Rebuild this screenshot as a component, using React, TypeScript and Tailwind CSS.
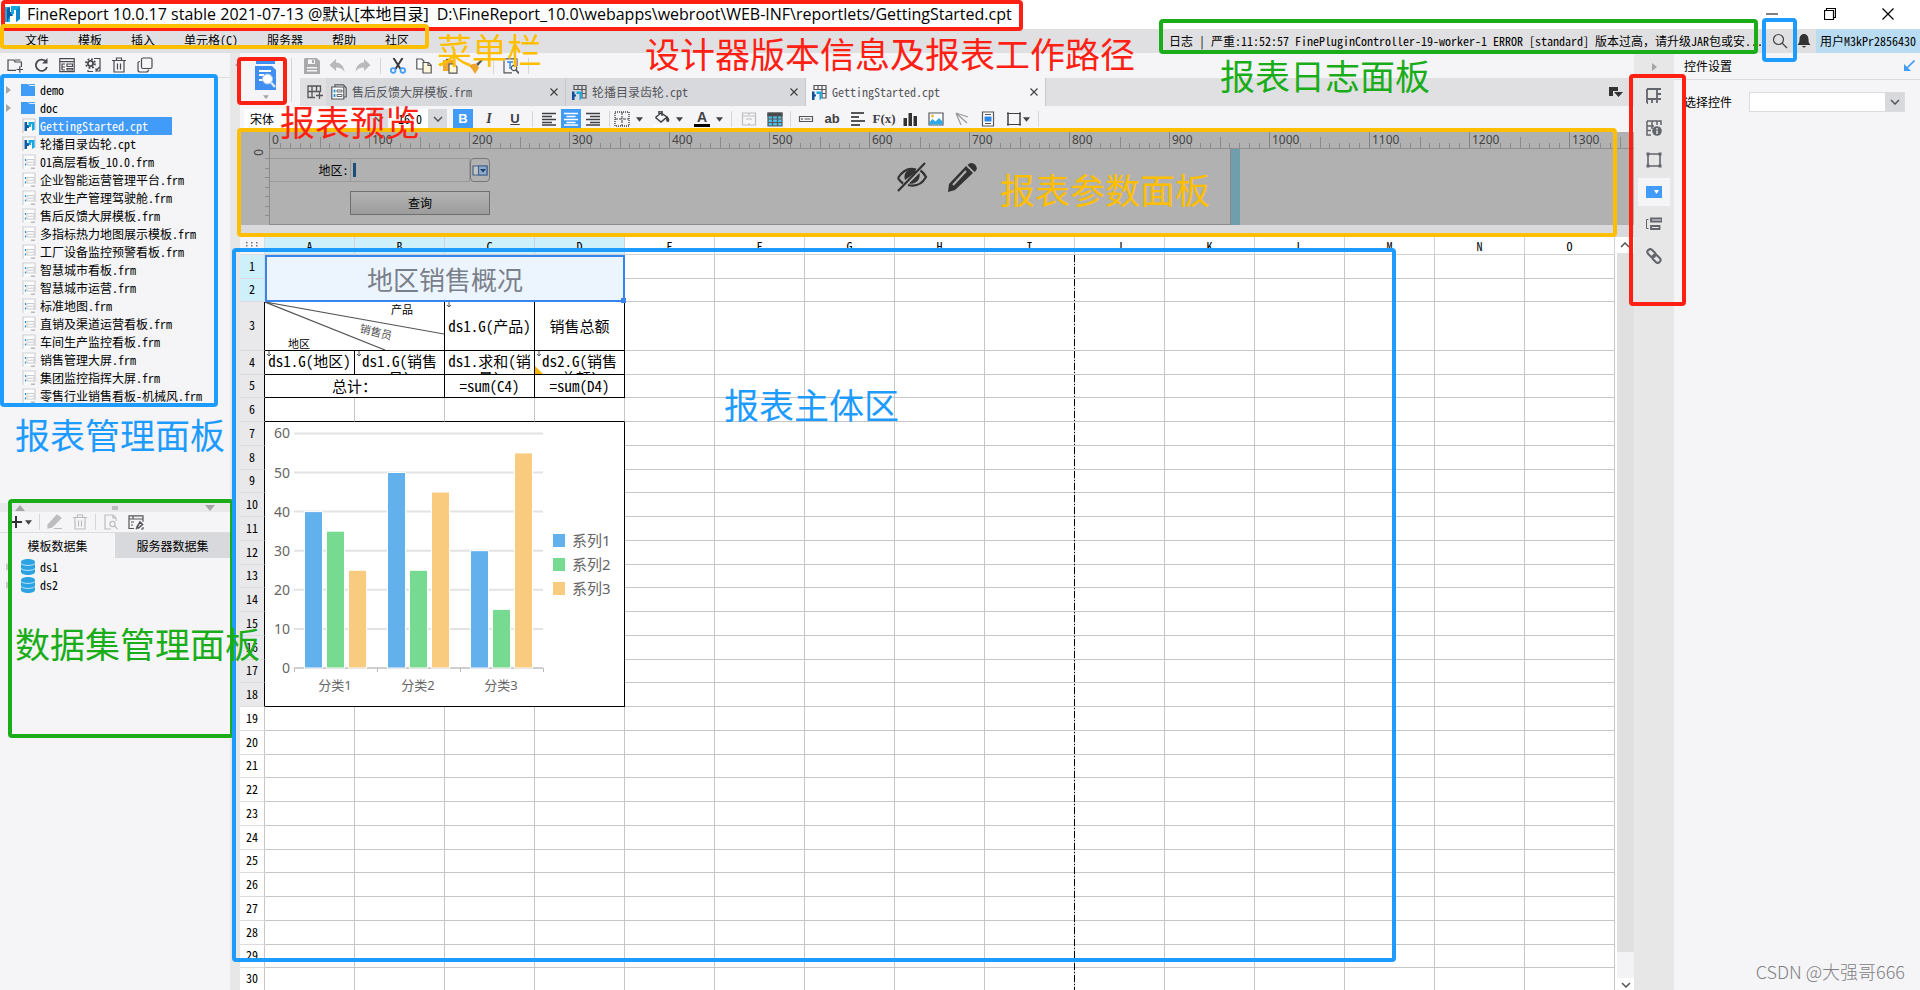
import React from "react";

const MONO = "font-['Noto_Sans_Mono_CJK_SC','Noto_Sans_CJK_SC',monospace]";

/* ---------- icons ---------- */

type IconProps = { children: React.ReactNode; box?: string; cls?: string };

function Icon({ children, box = "0 0 16 16", cls = "size-4" }: IconProps) {
  return (
    <svg viewBox={box} className={`${cls} shrink-0`} fill="none" stroke="currentColor" strokeWidth="1.2" aria-hidden="true">
      {children}
    </svg>
  );
}

const Logo = ({ cls = "size-4" }: { cls?: string }) => (
  <Icon cls={cls}>
    <path d="M1 1h5v5h3v4H6v6H0V1z" fill="#17a9e1" stroke="none" />
    <path d="M3 3l3-2v5h2v4H6l-3 6z" fill="#0d5aa7" stroke="none" />
    <path d="M7 0h9v13l-4 3V4h-2v4H7z" fill="#16a8e0" stroke="none" />
    <path d="M12 4l4-3v12l-4 3z" fill="#0e86cc" stroke="none" />
  </Icon>
);

const NewFolder = () => (
  <Icon>
    <path d="M9 13.400H1V3h6l1 2h6.400v5M9.500 12.500h6.500M12.800 9.300v6.500M8 3h5.500" />
  </Icon>
);
const Refresh = () => (
  <Icon>
    <path d="M14 10a5.700 5.700 0 1 1-1.400-5.800" strokeWidth="1.800" />
    <path d="M14.500 1v5.500H9z" fill="currentColor" stroke="none" />
  </Icon>
);
const Panel = () => (
  <Icon>
    <path d="M.8 1.600h14.400v13H.800zM.8 4.600h14.400" />
    <path d="M3 6.500v6.500M3 7h3M3 10h3M3 13h3" />
    <path d="M8 7h5.500v2.500H8zM8 11.500h5.500V13H8z" />
  </Icon>
);
const Gear = () => (
  <Icon>
    <circle cx="5.500" cy="6.500" r="2.600" strokeWidth="1.800" />
    <circle cx="5.500" cy="6.500" r="4.500" strokeWidth="1.800" strokeDasharray="1.770 1.770" />
    <path d="M9 1.500h6V14h-4M3 13v1.500h5M10 12h3.500M14.500 10l-4 4.500" />
  </Icon>
);
const Trash = () => (
  <Icon>
    <path d="M1 3.500h14M5.500 3V1h5v2M3 4v11h10V4M6.500 6.500v6M9.500 6.500v6" />
  </Icon>
);
const CopyFrames = () => (
  <Icon>
    <rect x="4.500" y="1" width="10.500" height="10.500" rx="1.500" />
    <path d="M3 4.500Q1 4.500 1 6v7q0 2 2 2h6q2.500 0 2.500-2.500" />
  </Icon>
);
const Folder = () => (
  <Icon cls="h-3 w-4" box="0 0 16 12">
    <path d="M1 0h7l1.500 2H15v10H1z" fill="#3f9cf7" stroke="none" />
    <path d="M9 .6h6" stroke="#3f9cf7" strokeWidth="1" />
  </Icon>
);
const CptIcon = () => (
  <Icon cls="h-4 w-4">
    <path d="M2 15V1h12v11" fill="#fff" stroke="#c9c9cc" />
    <path d="M3.500 4H6v3h2v3H6v3H3.500z" fill="#0d5aa7" stroke="none" />
    <path d="M7.500 4h6v7.500L11 13V6.500H10V9H7.500z" fill="#16a8e0" stroke="none" />
  </Icon>
);
const FrmIcon = () => (
  <Icon cls="h-4 w-4">
    <path d="M2 15V1h12v11" fill="#fff" stroke="#d0d0d2" />
    <path d="M6 5.500h7v5.500H6zM7 8.200h5" fill="#fff" stroke="#c9c9cc" strokeWidth="1" />
    <path d="M4.500 5v2M4.500 9.500v2" stroke="#1f8fd8" strokeWidth="1.200" />
    <path d="M10 13.500h4v1.500h-4z" fill="#bbb" stroke="none" />
  </Icon>
);
const Save = () => (
  <Icon>
    <path d="M1 0h11.500L16 3v13H0V1z" fill="#a9a9ac" stroke="none" />
    <path d="M4 1.500h7v4.500H4zM3 9h10v1.500H3zM3 12h10v1.500H3z" fill="#f5f5f7" stroke="none" />
    <path d="M8 2h2v3H8z" fill="#a9a9ac" stroke="none" />
  </Icon>
);
const Undo = () => (
  <Icon>
    <path d="M7 1v3.500c5 .5 8 3.500 8.500 9.500C13.500 10.500 11 9.500 7 9.500V13L.500 7z" fill="#b9b9bc" stroke="none" />
  </Icon>
);
const Redo = () => (
  <Icon>
    <path d="M9 1v3.500C4 5 1 8 .5 14 2.500 10.500 5 9.500 9 9.500V13l6.500-6z" fill="#b9b9bc" stroke="none" />
  </Icon>
);
const Cut = () => (
  <Icon>
    <path d="M3.500 0l7 11M12.500 0l-7 11" stroke="#3a3a3e" strokeWidth="2" />
    <circle cx="3.200" cy="12.500" r="2.300" stroke="#3f9cf7" strokeWidth="1.700" />
    <circle cx="12.800" cy="12.500" r="2.300" stroke="#3f9cf7" strokeWidth="1.700" />
  </Icon>
);
const Copy = () => (
  <Icon>
    <path d="M.8 1h5l2 2v8h-7z" fill="#fff" />
    <path d="M7 4.500h5.500l2.700 2.700V15H7z" fill="#fff7d8" />
    <path d="M12 4.500v3h3" />
  </Icon>
);
const Paste = () => (
  <Icon>
    <path d="M1 2h10v11H1z" fill="#f0a830" stroke="none" />
    <path d="M4 .8h4v2H4z" fill="#555" stroke="none" />
    <path d="M7 6h5l3 3v6.200H7z" fill="#fff7d8" />
  </Icon>
);
const Brush = () => (
  <Icon>
    <path d="M15 0l1 1-6 7-2-2z" fill="#555" stroke="none" />
    <path d="M0 7l8-1.500 3 4L7 16Q5 11 0 7" fill="#efa42a" stroke="none" />
  </Icon>
);
const FindDoc = () => (
  <Icon>
    <path d="M1 .8h13V8M1 .8v14h8" />
    <path d="M4 4h6M7 4v7" stroke="#2d87e6" strokeWidth="1.400" />
    <circle cx="11" cy="10" r="2.700" />
    <path d="M13 12l3 3.500" strokeWidth="1.800" />
  </Icon>
);
const GridPlus = () => (
  <Icon>
    <path d="M8 13.500H1V2h12.500v6M1 7.500h12.500M5 2v11.500M9.500 2v6M9 11.500h7M12.500 8v7" strokeWidth="1.300" />
  </Icon>
);
const FrmTab = () => (
  <Icon>
    <path d="M4 3V.8h8.500L15.200 4v9H13" fill="#e8e8ea" />
    <path d="M.8 3h12v12H.800z" fill="#fff" />
    <path d="M6 6h5v2H6zM6 10.500h5v2H6z" strokeWidth=".9" />
    <path d="M3.500 5.500v3M3.500 10v3" stroke="#1f8fd8" strokeWidth="1.800" />
  </Icon>
);
const CptTab = () => (
  <Icon>
    <path d="M3 6V1.500h12V14h-4M3 5.500h12M7 1.500v4M11 1.500V14M11 9.500h4" />
    <path d="M1 7.500h2.500v3H5v2H3.500V16H1z" fill="#0d4f9e" stroke="none" />
    <path d="M5.500 7.500h5V15l-2 1v-6h-3z" fill="#16a8e0" stroke="none" />
  </Icon>
);
const Lines = ({ kind }: { kind: "l" | "c" | "r" | "p" }) => {
  const d = {
    l: "M1 2.500h14M1 5.500h10M1 8.500h14M1 11.500h10M1 14h14",
    c: "M1 2.500h14M3.500 5.500h9M1 8.500h14M3.500 11.500h9M1 14h14",
    r: "M1 2.500h14M5 5.500h10M1 8.500h14M5 11.500h10M1 14h14",
    p: "M1 2h13M1 6h8M1 10h14M1 14h9",
  }[kind];
  return (
    <Icon>
      <path d={d} strokeWidth={kind === "p" ? 1.8 : 1.3} />
    </Icon>
  );
};
const Caret = () => (
  <svg viewBox="0 0 8 5" className="h-[5px] w-[7px] shrink-0" aria-hidden="true">
    <path d="M0 0h8L4 5z" fill="#444" />
  </svg>
);
const Chevron = () => (
  <svg viewBox="0 0 10 6" className="h-[6px] w-[10px]" fill="none" stroke="#555" strokeWidth="1.500" aria-hidden="true">
    <path d="M1 1l4 4 4-4" />
  </svg>
);
const Cross = () => (
  <svg viewBox="0 0 8 8" className="size-2" fill="none" stroke="#444" strokeWidth="1.200" aria-hidden="true">
    <path d="M.5.5l7 7M7.500.5l-7 7" />
  </svg>
);
const Db = () => (
  <Icon cls="h-4 w-4">
    <path d="M1 3v10c0 4 14 4 14 0V3c0-4-14-4-14 0" fill="#2ba3e3" stroke="none" />
    <path d="M1 4.500c2 2.500 12 2.500 14 0M1 9.500c2 2.500 12 2.500 14 0" stroke="#bfe4f8" strokeWidth="1" />
  </Icon>
);

/* ---------- small parts ---------- */

function IconButton({ label, cls, children }: { label: string; cls?: string; children: React.ReactNode }) {
  return (
    <button type="button" aria-label={label} className={`flex items-center justify-center ${cls ?? "h-5 w-[26px] text-[#55565a]"}`}>
      {children}
    </button>
  );
}

const Sep = ({ cls = "mx-1 h-5" }: { cls?: string }) => <span className={`w-px shrink-0 bg-[#d6d6d9] ${cls}`} />;

/* ---------- title and menu ---------- */

function TitleBar() {
  return (
    <header className="flex h-[29px] items-center bg-white pb-[2px] pl-1 font-['Open_Sans','Noto_Sans_CJK_SC',sans-serif] text-base text-black">
      <Logo />
      <h1 className="ml-[7px] whitespace-pre">FineReport 10.0.17 stable 2021-07-13 @默认[本地目录]</h1>
      <span className="ml-2">D:\FineReport_10.0\webapps\webroot\WEB-INF\reportlets/GettingStarted.cpt</span>
      <div className="ml-auto flex items-center gap-[46px] pr-[26px]">
        <button type="button" aria-label="最小化">
          <Icon cls="size-3" box="0 0 12 12"><path d="M0 6h12" stroke="#000" strokeWidth="1" /></Icon>
        </button>
        <button type="button" aria-label="还原">
          <Icon cls="size-3" box="0 0 12 12"><path d="M.5 2.500h9v9h-9zM2.500 2.500v-2h9v9h-2" stroke="#000" /></Icon>
        </button>
        <button type="button" aria-label="关闭">
          <Icon cls="size-3" box="0 0 12 12"><path d="M.5.5l11 11M11.500.5l-11 11" stroke="#000" /></Icon>
        </button>
      </div>
    </header>
  );
}

function MenuBar() {
  return (
    <div className="flex h-6 items-center bg-[#e0e0e2]">
      <nav className="flex gap-[29px] pb-[3px] pl-[25px] leading-5">
        {["文件", "模板", "插入", "单元格(C)", "服务器", "帮助", "社区"].map((m) => (
          <button type="button" key={m}>{m}</button>
        ))}
      </nav>
      <p className="ml-auto w-[592px] overflow-hidden pb-px whitespace-nowrap">
        日志 | 严重:11:52:57 FinePluginController-19-worker-1 ERROR [standard] 版本过高，请升级JAR包或安...
      </p>
      <IconButton label="搜索" cls="ml-[11px] text-[#444]">
        <Icon><circle cx="6.500" cy="6.500" r="5" /><path d="M10 10l5 5" /></Icon>
      </IconButton>
      <IconButton label="通知" cls="ml-2 text-[#333]">
        <Icon><path d="M8 1c3 0 4.500 2.500 4.500 5.500 0 3 .5 3.500 2 5.500h-13c1.500-2 2-2.500 2-5.500C3.500 3.500 5 1 8 1M6 13h4q-2 3-4 0" fill="currentColor" stroke="none" /></Icon>
      </IconButton>
      <button type="button" className="ml-1 h-6 w-[104px] bg-[#b9dcf3] pb-px pl-1 text-left whitespace-nowrap">用户M3kPr2856430</button>
    </div>
  );
}

/* ---------- left side ---------- */

const files = [
  "轮播目录齿轮.cpt", "01高层看板_10.0.frm", "企业智能运营管理平台.frm", "农业生产管理驾驶舱.frm", "售后反馈大屏模板.frm",
  "多指标热力地图展示模板.frm", "工厂设备监控预警看板.frm", "智慧城市看板.frm", "智慧城市运营.frm", "标准地图.frm",
  "直销及渠道运营看板.frm", "车间生产监控看板.frm", "销售管理大屏.frm", "集团监控指挥大屏.frm", "零售行业销售看板-机械风.frm",
];

function Twist({ cls = "fill-[#a5a5a8]" }: { cls?: string }) {
  return (
    <svg viewBox="0 0 5 8" className={`h-2 w-[5px] ${cls}`} aria-hidden="true"><path d="M0 0l5 4-5 4z" /></svg>
  );
}

function FileTree() {
  return (
    <aside className="flex w-[230px] shrink-0 flex-col">
      <div className="flex h-[25px] items-center gap-[10px] border-b border-[#dcdcdf] pl-[7px] text-[#4a4b50]">
        <button type="button" aria-label="新建文件夹"><NewFolder /></button>
        <button type="button" aria-label="刷新"><Refresh /></button>
        <button type="button" aria-label="打开位置"><Panel /></button>
        <button type="button" aria-label="权限"><Gear /></button>
        <button type="button" aria-label="删除"><Trash /></button>
        <button type="button" aria-label="复制"><CopyFrames /></button>
      </div>
      <ul className="h-[326px] overflow-hidden pt-[3px] leading-[18px] whitespace-nowrap">
        {["demo", "doc"].map((d) => (
          <li key={d} className="flex h-[18px] items-center pl-[6px]"><Twist /><span className="ml-[9px] mr-1"><Folder /></span>{d}</li>
        ))}
        <li className="flex h-[18px] items-center pl-[21px] text-white"><CptIcon /><span className="ml-[2px] w-[133px] bg-[#419bf9] pl-px">GettingStarted.cpt</span></li>
        {files.map((f) => (
          <li key={f} className="flex h-[18px] items-center gap-[3px] pl-[21px]">{f.endsWith("cpt") ? <CptIcon /> : <FrmIcon />}{f}</li>
        ))}
      </ul>
      <div className="mt-[99px] flex h-[9px] items-center justify-between bg-[#e9e9eb] px-[15px]">
        <svg viewBox="0 0 10 6" className="h-[6px] w-[10px] fill-[#a5a5a8]" aria-hidden="true"><path d="M0 6l5-6 5 6z" /></svg>
        <span className="h-1 w-[6px] bg-[#bdbdc0]" />
        <svg viewBox="0 0 10 6" className="h-[6px] w-[10px] fill-[#a5a5a8]" aria-hidden="true"><path d="M0 0l5 6 5-6z" /></svg>
      </div>
      <div className="flex h-[21px] items-center border-b border-[#dcdcdf] pl-2 text-[#bdbdc0]">
        <button type="button" aria-label="添加数据集" className="flex items-center gap-px text-[#333]">
          <Icon><path d="M8 2v12M2 8h12" strokeWidth="2" /></Icon><Caret />
        </button>
        <Sep cls="mx-[7px] h-4" />
        <button type="button" aria-label="编辑"><Icon><path d="M1 11L10 1l4 3-9 9-4 1zM7 14.500h8" fill="currentColor" /></Icon></button>
        <button type="button" aria-label="删除数据集" className="ml-[9px]"><Trash /></button>
        <Sep cls="mx-[7px] h-4" />
        <button type="button" aria-label="预览数据集"><Icon><path d="M8 15H2V1h8l3 3v3M10 1v3h3" /><circle cx="9.500" cy="10" r="2.600" /><path d="M11.500 12l3 3" /></Icon></button>
        <button type="button" aria-label="连接管理" className="ml-[9px] text-[#55565a]"><Icon><path d="M6 14.500H1V1.800h14v6M1 5h14M3 8h3M3 11h2M5 2v3M15 13v2h-2" /><path d="M9 13l3-5 2.500 2.500-4 3.500zM8 15l2-2" strokeWidth="1.600" /></Icon></button>
      </div>
      <div role="tablist" className="grid h-[25px] grid-cols-2">
        <button type="button" role="tab" aria-selected="true">模板数据集</button>
        <button type="button" role="tab" aria-selected="false" className="bg-[#d8d9dd]">服务器数据集</button>
      </div>
      <ul>
        {["ds1", "ds2"].map((d) => (
          <li key={d} className="flex h-[18px] items-center pl-[6px]"><Twist cls="fill-[#c9c9cc]" /><span className="mr-1 ml-[9px]"><Db /></span>{d}</li>
        ))}
      </ul>
    </aside>
  );
}

/* ---------- toolbars ---------- */

const tabs = [
  { name: "售后反馈大屏模板.frm", icon: <FrmTab />, active: false },
  { name: "轮播目录齿轮.cpt", icon: <CptTab />, active: false },
  { name: "GettingStarted.cpt", icon: <CptTab />, active: true },
];

function TopTools() {
  return (
    <div className="flex">
      <div className="flex w-[60px] shrink-0 items-center pl-[15px]">
        <button type="button" aria-label="预览" className="flex h-[38px] flex-col items-center gap-1">
          <svg viewBox="0 0 22 30" className="h-[30px] w-[22px]" aria-hidden="true">
            <path d="M1 0h19v3H1zM0 5h17l4 4v20H0z" fill="#3f8ff2" />
            <path d="M4 10h12M4 14h5M4 19h4" stroke="#fff" strokeWidth="2" />
            <circle cx="12.500" cy="18" r="5" fill="#fff" stroke="#a9c9ee" />
            <path d="M16 21.500l4 4.500" stroke="#dbe9fb" strokeWidth="2.400" />
          </svg>
          <svg viewBox="0 0 8 5" className="h-1 w-[6px] fill-[#a5a5a8]" aria-hidden="true"><path d="M0 0h8L4 5z" /></svg>
        </button>
        <Sep cls="ml-[14px] h-11" />
      </div>
      <div className="min-w-0 flex-1">
        <div className="flex h-[25px] items-center text-[#55565a]">
          <IconButton label="保存" cls="h-5 w-6"><Save /></IconButton>
          <IconButton label="撤销"><Undo /></IconButton>
          <IconButton label="重做"><Redo /></IconButton>
          <Sep cls="mx-1 h-4" />
          <IconButton label="剪切"><Cut /></IconButton>
          <IconButton label="复制单元格"><Copy /></IconButton>
          <IconButton label="粘贴"><Paste /></IconButton>
          <IconButton label="格式刷"><Brush /></IconButton>
          <Sep cls="mx-1 h-4" />
          <IconButton label="查找"><FindDoc /></IconButton>
          <Sep cls="mx-1 h-4" />
        </div>
        <div className="flex h-7 items-center bg-[#e0e0e2] text-[#55565a]">
          <IconButton label="新建模板" cls="h-5 w-[26px] pl-1 text-[#55565a]"><GridPlus /></IconButton>
          {tabs.map((t) => (
            <div key={t.name} className={`flex h-7 w-60 items-center border-r border-[#c9c9cd] pr-[7px] pl-[5px] ${t.active ? "bg-[#f5f5f7]" : "bg-[#d8d9dd]"}`}>
              {t.icon}
              <span className="ml-[5px]">{t.name}</span>
              <button type="button" aria-label={`关闭 ${t.name}`} className="ml-auto"><Cross /></button>
            </div>
          ))}
          <button type="button" aria-label="模板列表" className="mr-[10px] ml-auto">
            <Icon cls="h-3 w-4" box="0 0 16 12"><path d="M1 1h9v4H5v5H1zM6 6h9l-4.500 5z" fill="#333" stroke="none" /></Icon>
          </button>
        </div>
      </div>
    </div>
  );
}

function FormatBar() {
  return (
    <div className="flex h-[26px] items-center pl-1 text-[#3f4045]">
      <label className="flex h-5 w-[144px] items-center bg-white">
        <select aria-label="字体" className="w-[126px] appearance-none pl-[6px] text-black outline-none"><option>宋体</option></select>
        <span className="flex h-5 w-[18px] items-center justify-center bg-[#d8d9dd]"><Chevron /></span>
      </label>
      <label className="ml-[2px] flex h-5 w-[57px] items-center bg-white">
        <select aria-label="字号" className="w-[38px] appearance-none pl-2 text-black outline-none"><option>16.0</option></select>
        <span className="flex h-5 w-[19px] items-center justify-center bg-[#d8d9dd]"><Chevron /></span>
      </label>
      <IconButton label="加粗" cls="ml-[6px] h-5 w-5 bg-[#419bf9] font-['Liberation_Sans',sans-serif] text-[13px] font-bold text-white">B</IconButton>
      <IconButton label="倾斜" cls="ml-[3px] h-5 w-[26px] font-['Liberation_Serif',serif] text-sm font-bold italic">I</IconButton>
      <IconButton label="下划线" cls="h-5 w-[26px] font-['Liberation_Sans',sans-serif] text-[13px] font-bold underline">U</IconButton>
      <Sep cls="mx-1 h-4" />
      <IconButton label="左对齐" cls="h-5 w-6"><Lines kind="l" /></IconButton>
      <IconButton label="居中" cls="h-5 w-5 bg-[#419bf9] text-white"><Lines kind="c" /></IconButton>
      <IconButton label="右对齐" cls="h-5 w-6"><Lines kind="r" /></IconButton>
      <Sep cls="mx-1 h-4" />
      <IconButton label="边框" cls="h-5 gap-[6px]">
        <Icon><path d="M1 1h14v14H1z" strokeDasharray="1 1" strokeWidth="1.400" /><path d="M8 1v14M1 8h14" strokeWidth="1" strokeDasharray="3 1" /></Icon><Caret />
      </IconButton>
      <IconButton label="背景色" cls="ml-[11px] h-5 gap-[6px]">
        <Icon><path d="M2 6l5-4 6 4-6 5-5-4zM5 4V0h3v5" strokeWidth="1.500" /><path d="M13 6q3 3 1 4.500Q12 10 13 6" fill="currentColor" /><path d="M0 13.500h15v2.500H0z" fill="#fff" stroke="none" /></Icon><Caret />
      </IconButton>
      <IconButton label="前景色" cls="ml-[11px] h-5 gap-[6px]">
        <span className="flex w-4 flex-col items-center font-['Liberation_Sans',sans-serif] text-sm leading-3 font-bold">A<span className="mt-px h-[3px] w-4 bg-black" /></span><Caret />
      </IconButton>
      <Sep cls="mr-1 ml-2 h-4" />
      <IconButton label="合并单元格" cls="h-5 w-[26px] text-[#bdbdc0]"><Icon><path d="M1.500 2h13v12h-13zM1.500 5h13M8 2v2M8 14v-2M5 8h6" /></Icon></IconButton>
      <IconButton label="插入表格"><Icon><path d="M1 2h14v13H1z" fill="#49c2ee" /><path d="M1 2h14v3H1z" fill="#444" /><path d="M1 8h14M1 11.500h14M5.500 4v11M10.500 4v11" /></Icon></IconButton>
      <Sep cls="mx-[2px] h-4" />
      <IconButton label="控件"><Icon><path d="M1.500 5.500h13v5h-13zM6.500 8h6M4 7v2" /></Icon></IconButton>
      <IconButton label="文本" cls="h-5 w-[26px] font-['Liberation_Sans',sans-serif] text-[13px] font-bold">ab</IconButton>
      <IconButton label="富文本"><Lines kind="p" /></IconButton>
      <IconButton label="公式" cls="h-5 w-[26px] font-['Liberation_Serif',serif] text-[13px] font-bold">F(x)</IconButton>
      <IconButton label="图表"><Icon><path d="M1.500 7h3.500v8H1.500zM6.500 2H10v13H6.500zM11.500 5H15v10h-3.500z" fill="#333" stroke="none" /></Icon></IconButton>
      <IconButton label="图片"><Icon><path d="M1 2h14v12H1z" fill="#fff" /><path d="M1.500 13.500V11l3-3 3 2.500L11 7l3.500 3.500v3z" fill="#2fa8e8" stroke="none" /><circle cx="4.500" cy="5" r="1.400" fill="#f5b335" stroke="none" /></Icon></IconButton>
      <IconButton label="斜线"><Icon><path d="M2 2l12 4M2 2l11 10M2 2l5 12" stroke="#999" /></Icon></IconButton>
      <IconButton label="子报表"><Icon><path d="M2.500 1h11v14h-11z" fill="#fff" /><path d="M5 3.500h6M5 12.500h6" /><path d="M4.500 5.500h7v5h-7z" fill="#2d87e6" stroke="none" /></Icon></IconButton>
      <IconButton label="悬浮元素" cls="ml-[5px] h-5 gap-px"><Icon><path d="M2 2.500h12v11H2zM1 2.500h14M1 13.500h14M2 1v14M14 1v14" strokeWidth="1" /></Icon><Caret /></IconButton>
      <Sep cls="mx-2 h-4" />
    </div>
  );
}

/* ---------- parameter panel ---------- */

function Ruler() {
  return (
    <div className="flex h-[17px] flex-1 overflow-hidden border-b border-[#8f8f8f] text-xs text-[#444]">
      {Array.from({ length: 14 }, (_, i) => (
        <div key={i} className="relative flex w-[100px] shrink-0 items-end border-l border-[#858585]">
          <span className="absolute top-0 left-[2px] font-['Noto_Sans',sans-serif] leading-4">{i * 100}</span>
          {Array.from({ length: 10 }, (_, k) => (
            <span key={k} className={`w-[10px] ${k === 0 ? "h-0" : k === 5 ? "h-[11px] border-l" : "h-[5px] border-l"} border-[#8b8b8b]`} />
          ))}
        </div>
      ))}
    </div>
  );
}

function ParamPanel() {
  return (
    <section className="h-[105px] bg-[#b1b1b1]">
      <div className="flex pl-[29px]"><Ruler /></div>
      <div className="flex h-[76px] pl-3">
        <div className="flex w-[18px] justify-between border-r border-[#8b8b8b]">
          <span className="h-4 font-['Noto_Sans',sans-serif] text-xs leading-3 text-[#444] [writing-mode:vertical-rl]">0</span>
          <span className="mt-[9px] flex flex-col">
            {Array.from({ length: 7 }, (_, k) => <span key={k} className="h-[10px] w-1 border-t border-[#8b8b8b]" />)}
          </span>
        </div>
        <div className="flex w-[961px] border-r border-b border-[#8b8b8b]">
          <div className="w-[220px] pt-[9px]">
            <div className="flex h-6 items-center">
              <label htmlFor="area" className="h-6 w-20 border-y border-[#9a9a9a] pr-px text-right leading-[22px]">地区:</label>
              <span className="flex h-6 w-[121px] items-center border border-[#9a9a9a] pl-[2px]">
                <span className="h-[14px] w-[3px] bg-[#1d4e78]" />
                <input id="area" className="w-full bg-transparent outline-none" />
              </span>
              <IconButton label="选择地区" cls="h-6 w-5 rounded-sm border border-[#777]">
                <Icon><path d="M1 4h14v9H1z" fill="#c4c4c4" stroke="#45658c" /><path d="M6.500 4H15v9H6.500z" fill="#8fa9c8" stroke="#45658c" /><path d="M8 7h6l-3 3.500z" fill="#1d3f6b" stroke="none" /></Icon>
              </IconButton>
            </div>
            <button type="button" className="mt-[9px] ml-20 h-6 w-[140px] border border-[#6f6f6f] bg-linear-to-b from-[#b4b4b4] to-[#9c9c9c]">查询</button>
          </div>
          <div className="ml-[406px] flex gap-[18px] pt-3 text-[#333]">
            <button type="button" aria-label="隐藏" className="size-8">
              <Icon cls="size-8" box="0 0 32 32">
                <path d="M2 17C7 9 13 6.500 20 8.500M12 24c8 2 14-1 18-8-1.500-3-3.500-5-5.500-6.500M2 17c1 2 3 4 5 5.500" strokeWidth="2.200" />
                <path d="M9 19c-2-6 2-11 8-10 2 0 3 .5 4 1.500zM13 22.500L23.500 12c1.500 6-3.500 12-10.500 10.500" fill="currentColor" stroke="none" />
                <path d="M2 30L29 2" strokeWidth="2.200" />
              </Icon>
            </button>
            <button type="button" aria-label="编辑参数面板" className="size-8">
              <Icon cls="size-8" box="0 0 32 32">
                <path d="M20 5l7 7L9 29l-7 2 1-8z" fill="currentColor" stroke="none" />
                <path d="M7 24L20 10" stroke="#b1b1b1" strokeWidth="2" />
                <path d="M21.500 4q4-4 8 0 3 4-1 7z" fill="currentColor" stroke="none" />
              </Icon>
            </button>
          </div>
        </div>
        <span className="h-[76px] w-[9px] bg-[#6f9fac]" />
      </div>
      <div className="h-3 bg-[#dadadc]" />
    </section>
  );
}

/* ---------- sheet ---------- */

function Chart() {
  const groups = [[40, 35, 25], [50, 25, 45], [30, 15, 55]];
  const colors = ["#62b0ec", "#77da91", "#f8cb7f"];
  const y = (v: number) => 246 - v * 3.91;
  return (
    <svg viewBox="0 0 359 283" className="block h-[283px] w-[359px] font-['Noto_Sans','Noto_Sans_CJK_SC',sans-serif]" role="img" aria-label="系列柱形图">
      {[0, 10, 20, 30, 40, 50, 60].map((v) => (
        <g key={v}>
          <path d={`M29 ${y(v)}h249`} stroke={v ? "#e3e3e3" : "#cfcfcf"} strokeWidth="2" />
          <text x="25" y={y(v) + 5} textAnchor="end" fontSize="14" fill="#666">{v}</text>
        </g>
      ))}
      <path d="M29.500 246v4M112.500 246v4M195.500 246v4M278.500 246v4" stroke="#bbb" />
      {groups.map((g, i) => (
        <g key={i}>
          {g.map((v, k) => (
            <rect key={k} x={39.5 + i * 83 + k * 22} y={y(v)} width="18" height={v * 3.91} fill={colors[k]} stroke="#fff" strokeWidth="1" />
          ))}
          <text x={70 + i * 83} y="268" textAnchor="middle" fontSize="13" fill="#666">{`分类${i + 1}`}</text>
        </g>
      ))}
      {colors.map((c, i) => (
        <g key={c}>
          <rect x="288" y={112 + i * 24} width="12" height="13" fill={c} />
          <text x="307" y={124 + i * 24} fontSize="15" fill="#666">{`系列${i + 1}`}</text>
        </g>
      ))}
    </svg>
  );
}

const rowHeights = [
  "h-[24px]", "h-[23px]", "h-[49px]", "h-[24px]", "h-[23px]", "h-[24px]",
  ...Array.from({ length: 24 }, (_, i) => (i === 23 ? "h-[23px]" : i % 4 === 2 ? "h-[23px]" : "h-[24px]")),
];

const blank = "border-r border-b border-[#c6c6c8] p-0";
const black = "border-r border-b border-black p-0 text-center text-[15px]";

function Mark() {
  return (
    <svg viewBox="0 0 6 6" className="absolute top-0 left-px size-[6px]" fill="none" stroke="#555" aria-hidden="true">
      <path d="M3 0v5M1 3l2 2 2-2" />
    </svg>
  );
}

function Clip({ text, mark, flag }: { text: string; mark?: boolean; flag?: boolean }) {
  return (
    <td className={black}>
      <div className="relative h-[23px] overflow-hidden pt-px leading-[17px] break-all">
        {mark && <Mark />}
        {text}
        {flag && <span className="absolute bottom-0 left-0 size-2 bg-[#f7b500] [clip-path:polygon(0_0,100%_100%,0_100%)]" />}
      </div>
    </td>
  );
}

function leading(n: number) {
  switch (n) {
    case 1:
      return (
        <td colSpan={4} rowSpan={2} className="relative border-2 border-[#3585f0] bg-[#ecf5fe] p-0 text-center text-[26px] leading-9 text-[#7a808a]">
          地区销售概况
          <span className="absolute -right-[3px] -bottom-[3px] size-[5px] bg-[#3585f0]" />
        </td>
      );
    case 3:
      return (
        <>
          <td colSpan={2} className={`${black} relative`}>
            <svg viewBox="0 0 179 48" className="block h-12 w-[179px]" aria-hidden="true" fontSize="11">
              <path d="M0 0l179 32M0 0l120 48" stroke="#555" strokeWidth="1.200" />
              <text x="126" y="12">产品</text>
              <text x="94" y="30" transform="rotate(14 94 30)" fill="#555">销售员</text>
              <text x="23" y="46">地区</text>
            </svg>
          </td>
          <td className={`${black} relative`}><Mark />ds1.G(产品)</td>
          <td className={black}>销售总额</td>
        </>
      );
    case 4:
      return (
        <>
          <Clip text="ds1.G(地区)" mark />
          <Clip text="ds1.G(销售员)" mark />
          <Clip text="ds1.求和(销量)" />
          <Clip text="ds2.G(销售总额)" mark flag />
        </>
      );
    case 5:
      return (
        <>
          <td colSpan={2} className={black}>总计：</td>
          <td className={black}>=sum(C4)</td>
          <td className={black}>=sum(D4)</td>
        </>
      );
    case 6:
      return [0, 1, 2, 3].map((k) => <td key={k} className="border-r border-b border-r-[#c6c6c8] border-b-black p-0" />);
    case 7:
      return (
        <td colSpan={4} rowSpan={12} className="border-r border-b border-black bg-white p-0 align-top"><Chart /></td>
      );
    default:
      return n > 18 ? [0, 1, 2, 3].map((k) => <td key={k} className={blank} />) : null;
  }
}

function Sheet() {
  return (
    <div className="flex bg-white">
      <div className="relative min-w-0 flex-1 overflow-hidden">
        <table className="w-[1375px] table-fixed border-separate border-spacing-0 leading-4">
          <colgroup>
            <col className="w-[25px]" />
            {Array.from({ length: 15 }, (_, i) => <col key={i} className="w-[90px]" />)}
          </colgroup>
          <thead>
            <tr className="h-[18px]">
              <th aria-label="全选" className="border-r border-b border-[#dcdcdf] bg-[#f5f5f7] p-0">
                <svg viewBox="0 0 12 8" className="mx-auto h-2 w-3 fill-[#777]" aria-hidden="true">
                  {[0, 5, 10].map((x) => [0, 3, 6].map((y) => <rect key={`${x}${y}`} x={x} y={y} width="1.500" height="1.500" />))}
                </svg>
              </th>
              {"ABCDEFGHIJKLMNO".split("").map((c, i) => (
                <th key={c} className={`border-r border-b border-[#d2d2d5] p-0 leading-4 font-medium ${i < 4 ? "bg-[#cdf0fb]" : "bg-white"}`}>{c}</th>
              ))}
            </tr>
          </thead>
          <tbody>
            {rowHeights.map((h, i) => {
              const n = i + 1;
              const bg = n < 3 ? "bg-[#cdf0fb] border-r-[#dcdcdf]" : n < 19 ? "bg-[#e9e9eb] border-r-black" : "bg-white border-r-[#c6c6c8]";
              return (
                <tr key={n} className={h}>
                  <th className={`border-r border-b border-b-[#dcdcdf] p-0 pb-[2px] font-normal ${bg}`}>{n}</th>
                  {leading(n)}
                  {Array.from({ length: 11 }, (_, k) => <td key={k} className={blank} />)}
                </tr>
              );
            })}
          </tbody>
        </table>
        <span className="absolute top-[18px] bottom-0 left-[834px] w-px bg-[repeating-linear-gradient(to_bottom,#000_0_7px,#c6c6c8_7px_9px,#000_9px_10px,#c6c6c8_10px_12px)]" />
      </div>
      <div className="flex w-[17px] flex-col bg-[#f3f3f5]">
        <button type="button" aria-label="向上滚动" className="flex h-4 rotate-180 items-center justify-center bg-white"><Chevron /></button>
        <span className="mb-[26px] flex-1 bg-[#e0e0e1]" />
        <button type="button" aria-label="向下滚动" className="flex h-[13px] items-center justify-center bg-white"><Chevron /></button>
      </div>
    </div>
  );
}

/* ---------- right side ---------- */

const railIcons: { label: string; art: React.ReactNode }[] = [
  { label: "单元格元素", art: <path d="M1 1h14M1 1v14M1 11h10M11 1v10M11 6h4M11 11h4M6 11v4M11 11v4M1 15h1" strokeWidth="1.800" /> },
  { label: "单元格属性", art: <><path d="M1 1v14h4M1 1h14v4M1 6h7M1 10.500h4M6 1v8M11 1v4" strokeWidth="1.500" /><circle cx="11" cy="11" r="4.800" fill="currentColor" stroke="none" /><path d="M11 8v1.500M11 10.500V14" stroke="#e7e7e7" strokeWidth="1.500" /></> },
  { label: "悬浮元素面板", art: <><path d="M2 2h12v12H2z" strokeWidth="1.600" /><path d="M.5.5h3v3h-3zM12.500.5h3v3h-3zM.5 12.500h3v3h-3zM12.500 12.500h3v3h-3z" fill="currentColor" stroke="none" /></> },
  { label: "控件设置", art: <><path d="M0 2h16v12H0z" fill="#419bf9" stroke="none" /><path d="M8 6h5l-2.500 4z" fill="#fff" stroke="none" /></> },
  { label: "条件属性", art: <><path d="M2.500 3.500H.500v9h2" strokeWidth="1" /><path d="M5 2.500h11v3H5zM5 10h8.500v3H5z" strokeWidth="1.800" /></> },
  { label: "超级链接", art: <><rect x="1" y="2.500" width="9" height="5.500" rx="2.700" transform="rotate(45 5.500 5.200)" strokeWidth="2.100" /><rect x="6" y="8" width="9" height="5.500" rx="2.700" transform="rotate(45 10.500 10.700)" strokeWidth="2.100" /></> },
];

function RightSide() {
  return (
    <aside className="flex w-[286px] shrink-0">
      <div className="flex w-10 flex-col items-center bg-[#e7e7e8] text-[#63656c]">
        <div className="flex h-[27px] items-center"><Twist /></div>
        {railIcons.map((r, i) => (
          <button type="button" key={r.label} aria-label={r.label} className={`mb-1 flex h-7 w-8 items-center justify-center ${i === 3 ? "bg-[#f5f5f7]" : ""} ${i === 0 ? "mt-[2px]" : ""}`}>
            <Icon>{r.art}</Icon>
          </button>
        ))}
      </div>
      <div className="flex-1">
        <div className="flex h-[27px] items-center justify-between border-b border-[#dcdcdf] pr-[5px] pb-px pl-[10px]">
          <h2>控件设置</h2>
          <button type="button" aria-label="收起"><Icon cls="size-3" box="0 0 12 12"><path d="M11.500.5L3 9" stroke="#419bf9" strokeWidth="1.600" /><path d="M1 4v7h7z" fill="#419bf9" stroke="none" /></Icon></button>
        </div>
        <div className="flex items-center pt-3 pl-[10px]">
          <label htmlFor="widget" className="w-[65px]">选择控件</label>
          <span className="flex h-5 w-[156px] border border-[#dcdcdf] bg-white">
            <select id="widget" className="w-[135px] appearance-none outline-none"><option></option></select>
            <span className="flex flex-1 items-center justify-center bg-[#d8d9dd]"><Chevron /></span>
          </span>
        </div>
      </div>
    </aside>
  );
}

/* ---------- callouts ---------- */

const frames = [
  "left-px top-0 w-[1022px] h-[31px] border-[#ff2014]",
  "left-0 top-[24px] w-[429px] h-[25px] border-[#ffbf00]",
  "left-0 top-[74px] w-[218px] h-[333px] border-[#1e9bff]",
  "left-[8px] top-[499px] w-[226px] h-[239px] border-[#1aad19]",
  "left-[237px] top-[57px] w-[50px] h-[48px] border-[#ff2014]",
  "left-[237px] top-[128px] w-[1380px] h-[109px] border-[#ffbf00]",
  "left-[232px] top-[248px] w-[1164px] h-[714px] border-[#1e9bff]",
  "left-[1159px] top-[19px] w-[599px] h-[35px] border-[#1aad19]",
  "left-[1762px] top-[18px] w-[35px] h-[44px] border-[#1e9bff]",
  "left-[1629px] top-[74px] w-[57px] h-[232px] border-[#ff2014]",
];

const notes = [
  { text: "菜单栏", at: "left-[437px] top-[28px] text-[#ffbf00]" },
  { text: "设计器版本信息及报表工作路径", at: "left-[645px] top-[32px] text-[#ff2014]" },
  { text: "报表预览", at: "left-[280px] top-[100px] text-[#ff2014]" },
  { text: "报表日志面板", at: "left-[1220px] top-[54px] text-[#1aad19]" },
  { text: "报表参数面板", at: "left-[1000px] top-[168px] text-[#ffbf00]" },
  { text: "报表管理面板", at: "left-[15px] top-[413px] text-[#1e9bff]" },
  { text: "报表主体区", at: "left-[724px] top-[383px] text-[#1e9bff]" },
  { text: "数据集管理面板", at: "left-[15px] top-[622px] text-[#1aad19]" },
];

function Callouts() {
  return (
    <div className="pointer-events-none absolute inset-0">
      {frames.map((f) => <span key={f} className={`absolute rounded-[4px] border-4 ${f}`} />)}
      {notes.map((n) => (
        <p key={n.text} className={`absolute font-['Noto_Sans_CJK_SC',sans-serif] text-[35px] leading-[42px] font-normal whitespace-nowrap ${n.at}`}>{n.text}</p>
      ))}
      <p className="absolute right-[15px] bottom-2 font-['Noto_Sans_CJK_SC',sans-serif] text-[18px] leading-6 font-light text-[#808084]">CSDN @大强哥666</p>
    </div>
  );
}

export default function App() {
  return (
    <div className={`relative flex min-h-screen flex-col overflow-hidden bg-[#f5f5f7] text-xs text-black ${MONO}`}>
      <TitleBar />
      <MenuBar />
      <div className="flex flex-1">
        <FileTree />
        <div className="w-[10px] shrink-0 bg-[#e7e7e8] pt-2 pl-[3px]"><span className="block rotate-180"><Twist /></span></div>
        <main className="min-w-0 flex-1">
          <TopTools />
          <FormatBar />
          <ParamPanel />
          <Sheet />
        </main>
        <RightSide />
      </div>
      <Callouts />
    </div>
  );
}
